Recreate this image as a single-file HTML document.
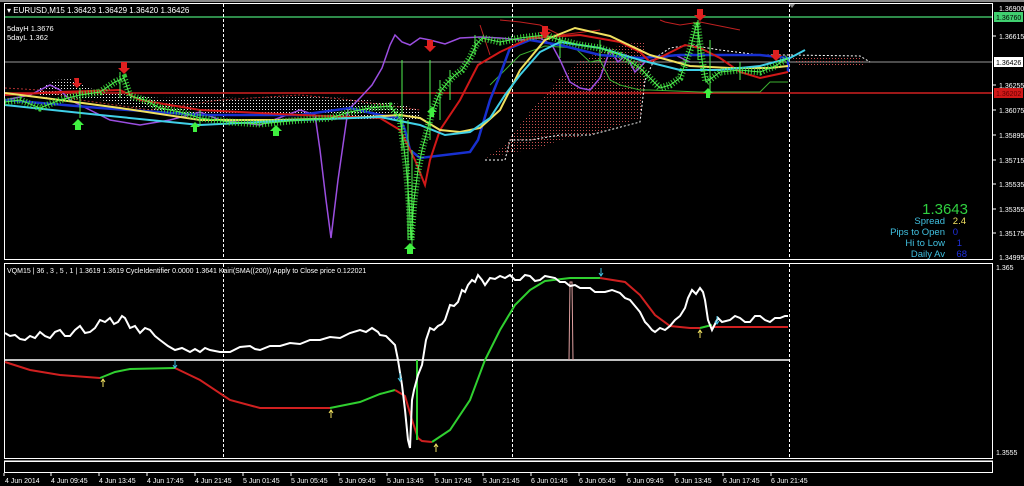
<!DOCTYPE html>
<html><head><meta charset="utf-8"><style>
html,body{margin:0;padding:0;background:#000;width:1024px;height:486px;overflow:hidden}
svg{display:block}
text{font-family:"Liberation Sans",sans-serif}
</style></head><body>
<svg width="1024" height="486" viewBox="0 0 1024 486" xmlns="http://www.w3.org/2000/svg">
<defs>
<pattern id="rd" width="3" height="3" patternUnits="userSpaceOnUse"><rect x="1" y="1" width="1" height="1" fill="#c85050"/></pattern>
<pattern id="wd" width="3" height="3" patternUnits="userSpaceOnUse"><rect x="1" y="1" width="1" height="1" fill="#eee"/></pattern>
</defs>
<rect width="1024" height="486" fill="#000"/>
<rect x="0" y="0" width="1024" height="2" fill="#888"/>
<rect x="4.5" y="3.5" width="988" height="256" fill="none" stroke="#fff"/>
<line x1="5" y1="17" x2="992" y2="17" stroke="#2e8b4a" stroke-width="2"/>
<line x1="5" y1="62" x2="992" y2="62" stroke="#999" stroke-width="1"/>
<line x1="5" y1="93" x2="992" y2="93" stroke="#d02020" stroke-width="1.5"/>
<g stroke="#fff" stroke-dasharray="3,2" stroke-width="1">
<line x1="223.5" y1="4" x2="223.5" y2="259"/><line x1="512.5" y1="4" x2="512.5" y2="259"/><line x1="789.5" y1="4" x2="789.5" y2="259"/>
<line x1="223.5" y1="264" x2="223.5" y2="458"/><line x1="512.5" y1="264" x2="512.5" y2="458"/><line x1="789.5" y1="264" x2="789.5" y2="458"/>
</g>
<polygon points="789,4 795,4 792,8" fill="#888"/>
<polygon points="485,158 505,145 520,125 535,105 548,92 560,78 578,62 600,52 625,44 645,42 645,80 640,118 620,125 590,135 560,140 540,148 515,152" fill="url(#rd)"/>
<polyline points="485,160 505,160 510,140 530,140 560,135 590,135 640,122 645,80" fill="none" stroke="#fff" stroke-dasharray="2,2"/>
<polyline points="645,80 655,58 670,48 690,45 720,50 760,55 790,55 860,56 870,62" fill="none" stroke="#fff" stroke-dasharray="2,2"/>
<polygon points="790,58 860,58 866,66 800,66" fill="url(#rd)"/>
<polyline points="500,20 520,22 540,25 560,35 600,30" fill="none" stroke="#c02020" stroke-width="1"/>
<polyline points="660,20 665,22 680,25 700,22 740,30" fill="none" stroke="#c02020" stroke-width="1"/>
<polyline points="480,25 485,40 490,55" fill="none" stroke="#c02020"/>
<polygon points="40,88 55,80 70,79 85,86 100,92 160,98 200,97 240,98 300,97 350,98 400,104 420,110 420,120 380,120 330,118 300,118 250,118 200,116 150,110 100,100 60,96 40,98" fill="url(#wd)"/>
<polyline points="5,88 40,90 80,100 150,110 220,100 300,95 350,100 420,110" fill="none" stroke="#b03030" stroke-dasharray="2,2"/>
<polyline points="5,100 30,95 50,85 60,90 70,100 90,110 110,120 140,125 170,120 200,112 220,120 260,125 300,110 315,115 320,150 326,200 331,238 338,180 348,110 360,98 372,85 382,68 390,45 395,35 402,42 410,45 420,38 430,40 445,44 460,38 480,37 500,38 520,40 540,38 552,45 560,60 570,82 580,88 590,90 600,78 610,50 618,62 626,55 635,72 645,62 660,58 675,55 690,62" fill="none" stroke="#9b4ee0" stroke-width="1.5"/>
<polyline points="490,85 500,75 520,55 545,46 560,47 575,48 590,62 600,60 610,80 620,85 640,90 650,90 700,92 740,92 760,92 770,82 788,82" fill="none" stroke="#3cb030" stroke-width="1"/>
<polyline points="5,100 100,108 200,115 300,115 350,108 380,115 400,118 405,130 410,150 420,158 470,152 478,140 490,100 500,75 510,48 530,40 560,45 600,55 640,58 680,55 720,55 760,55 788,58 788,72" fill="none" stroke="#1830d0" stroke-width="2.5"/>
<polyline points="5,95 60,92 120,90 140,100 200,110 300,115 380,118 400,130 415,160 425,185 430,160 440,130 460,100 478,65 500,52 530,38 580,35 620,42 640,52 650,62 665,55 685,45 700,48 720,58 740,72 760,78 788,72" fill="none" stroke="#d01818" stroke-width="2"/>
<polyline points="5,93 60,100 120,108 200,120 280,120 350,118 400,115 420,118 440,130 460,132 480,128 500,110 520,70 545,40 575,28 610,36 650,55 690,66 730,68 770,68 788,66" fill="none" stroke="#f0e060" stroke-width="2"/>
<polyline points="5,105 100,115 200,125 300,120 380,117 420,125 445,135 470,132 490,118 505,95 520,75 540,52 560,42 600,48 640,60 680,70 720,70 760,66 790,58 805,50" fill="none" stroke="#40d0e8" stroke-width="2"/>
<polyline points="5,102 20,100 40,108 60,100 80,95 100,92 115,82 124,78 130,96 145,100 160,108 180,112 200,118 230,122 260,124 300,120 330,118 350,112 370,108 390,106 400,118 403,140 406,165 409,200 411,240 414,200 418,170 422,150 426,135 432,112 440,92 448,82 455,75 462,70 470,58 476,45 482,38 500,42 520,38 545,35 560,40 580,45 600,48 620,55 640,68 660,88 670,85 680,78 690,50 697,22 702,60 706,82 712,78 720,72 740,70 760,72 775,66 788,58" fill="none" stroke="#40e040" stroke-width="7" stroke-dasharray="1,2" opacity="0.9"/>
<polyline points="5,102 20,100 40,108 60,100 80,95 100,92 115,82 124,78 130,96 145,100 160,108 180,112 200,118 230,122 260,124 300,120 330,118 350,112 370,108 390,106 400,118 403,140 406,165 409,200 411,240 414,200 418,170 422,150 426,135 432,112 440,92 448,82 455,75 462,70 470,58 476,45 482,38 500,42 520,38 545,35 560,40 580,45 600,48 620,55 640,68 660,88 670,85 680,78 690,50 697,22 702,60 706,82 712,78 720,72 740,70 760,72 775,66 788,58" fill="none" stroke="#50f050" stroke-width="1"/>
<g stroke="#50f050" stroke-width="1">
<line x1="120" y1="72" x2="120" y2="98"/><line x1="80" y1="88" x2="80" y2="118"/><line x1="200" y1="110" x2="200" y2="126"/>
<line x1="402" y1="60" x2="402" y2="150"/><line x1="408" y1="120" x2="408" y2="240"/><line x1="412" y1="150" x2="412" y2="250"/>
<line x1="430" y1="60" x2="430" y2="140"/><line x1="440" y1="80" x2="440" y2="120"/><line x1="450" y1="70" x2="450" y2="100"/>
<line x1="475" y1="35" x2="475" y2="55"/><line x1="698" y1="20" x2="698" y2="60"/><line x1="710" y1="40" x2="710" y2="95"/>
<line x1="560" y1="38" x2="560" y2="58"/><line x1="600" y1="40" x2="600" y2="62"/><line x1="740" y1="62" x2="740" y2="80"/>
</g>
<g fill="#e02020">
<path d="M121,62h6v6h3l-6,6l-6,-6h3z"/><path d="M427,40h6v6h3l-6,6l-6,-6h3z"/><path d="M542,26h6v6h3l-6,6l-6,-6h3z"/>
<path d="M697,9h6v6h3l-6,6l-6,-6h3z"/><path d="M773,50h6v5h3l-6,6l-6,-6h3z"/><path d="M74,78h5v5h3l-5,5l-5,-5h3z"/>
</g>
<g fill="#40f040">
<path d="M78,119l6,6h-3v5h-6v-5h-3z"/><path d="M195,122l5,5h-3v5h-4v-5h-3z"/><path d="M276,125l6,6h-3v5h-6v-5h-3z"/>
<path d="M410,243l6,6h-3v5h-6v-5h-3z"/><path d="M432,107l5,5h-3v5h-4v-5h-3z"/><path d="M708,88l5,5h-3v5h-4v-5h-3z"/>
</g>
<text x="7" y="13" fill="#fff" font-size="8">▾ EURUSD,M15  1.36423 1.36429 1.36420 1.36426</text>
<text x="7" y="31" fill="#fff" font-size="7.5">5dayH 1.3676</text>
<text x="7" y="40" fill="#fff" font-size="7.5">5dayL 1.362</text>
<text x="968" y="214" fill="#30d040" font-size="15" text-anchor="end">1.3643</text>
<g font-size="9.5" text-anchor="end">
<text x="945" y="224" fill="#40c0e0">Spread</text><text x="966" y="224" fill="#f0e060">2.4</text>
<text x="945" y="235" fill="#40c0e0">Pips to Open</text><text x="958" y="235" fill="#2030e0">0</text>
<text x="945" y="246" fill="#40c0e0">Hi to Low</text><text x="962" y="246" fill="#2030e0">1</text>
<text x="945" y="257" fill="#40c0e0">Daily Av</text><text x="967" y="257" fill="#2030e0">68</text>
</g>
<g fill="#fff" font-size="7">
<text x="999" y="11">1.36900</text><text x="999" y="39">1.36615</text><text x="999" y="88">1.36255</text>
<text x="999" y="113">1.36075</text><text x="999" y="138">1.35895</text><text x="999" y="163">1.35715</text>
<text x="999" y="187">1.35535</text><text x="999" y="212">1.35355</text><text x="999" y="236">1.35175</text><text x="999" y="260">1.34995</text>
</g>
<rect x="994" y="12" width="29" height="10" fill="#40d070"/><text x="996" y="20" font-size="7" fill="#000">1.36760</text>
<rect x="994" y="57" width="29" height="10" fill="#fff"/><text x="996" y="65" font-size="7" fill="#000">1.36426</text>
<rect x="994" y="88" width="29" height="10" fill="#d01818"/><text x="996" y="96" font-size="7" fill="#600">1.36202</text>
<g stroke="#fff"><line x1="993" y1="36" x2="996" y2="36"/><line x1="993" y1="85" x2="996" y2="85"/><line x1="993" y1="110" x2="996" y2="110"/><line x1="993" y1="135" x2="996" y2="135"/><line x1="993" y1="160" x2="996" y2="160"/><line x1="993" y1="184" x2="996" y2="184"/><line x1="993" y1="209" x2="996" y2="209"/><line x1="993" y1="233" x2="996" y2="233"/></g>
<rect x="4.5" y="263.5" width="988" height="195" fill="none" stroke="#fff"/>
<text x="7" y="273" fill="#fff" font-size="7">VQM15 | 36 , 3 , 5 , 1  |  1.3619 1.3619  CycleIdentifier 0.0000 1.3641  Kairi(SMA((200)) Apply to Close price 0.122021</text>
<text x="996" y="270" fill="#fff" font-size="7">1.365</text>
<text x="996" y="455" fill="#fff" font-size="7">1.3555</text>
<line x1="5" y1="360" x2="789" y2="360" stroke="#fff" stroke-width="1.5"/>
<polyline points="569,360 570,282 572,282 573,360" fill="none" stroke="#e0a0a0" stroke-width="1"/>
<polyline points="5,362 30,370 60,375 100,378" fill="none" stroke="#d02020" stroke-width="2"/>
<polyline points="100,378 115,372 130,369 175,368" fill="none" stroke="#30d030" stroke-width="2"/>
<polyline points="175,368 200,380 230,400 260,408 330,408" fill="none" stroke="#d02020" stroke-width="2"/>
<polyline points="330,408 360,402 380,394 395,390" fill="none" stroke="#30d030" stroke-width="2"/>
<polyline points="395,390 405,396 412,420 418,438 422,441 432,442" fill="none" stroke="#d02020" stroke-width="2"/>
<polyline points="432,442 450,430 470,400 485,360 500,330 515,305 530,290 545,281 570,278 600,278" fill="none" stroke="#30d030" stroke-width="2"/>
<polyline points="600,278 625,282 640,295 655,315 670,326 690,328 700,328" fill="none" stroke="#d02020" stroke-width="2"/>
<polyline points="700,328 712,325" fill="none" stroke="#30d030" stroke-width="2"/>
<polyline points="712,327 788,327" fill="none" stroke="#d02020" stroke-width="2"/>
<line x1="417" y1="360" x2="417" y2="440" stroke="#30d030" stroke-width="2"/>
<polyline points="5,333 10,336 15,335 20,339 25,340 30,336 35,338 40,332 45,336 50,338 55,332 60,330 65,336 70,336 75,330 80,326 85,333 90,332 95,328 100,320 105,322 110,318 114,324 118,322 122,316 125,318 130,328 135,326 140,333 145,328 150,330 155,336 160,340 168,346 175,350 182,348 190,352 195,349 200,352 205,348 210,350 220,352 230,352 240,347 250,346 255,349 260,350 270,346 280,346 290,343 300,344 310,340 320,340 330,337 340,338 350,333 360,330 366,332 372,328 378,332 380,335 386,336 390,340 395,345 398,360 402,385 405,410 408,440 410,448 412,400 414,390 418,375 422,365 426,340 430,328 434,330 438,326 442,324 445,320 450,305 454,306 458,302 462,290 465,292 468,285 472,280 475,282 478,275 482,280 485,285 490,278 495,279 500,276 505,278 510,275 515,280 520,280 525,275 530,276 535,281 540,280 545,276 555,278 560,282 565,282 570,286 575,285 580,288 590,288 595,292 605,292 612,290 620,293 625,298 630,300 635,306 640,312 645,322 648,325 652,330 655,332 660,328 665,330 670,326 675,320 680,316 685,308 688,298 692,290 696,294 700,288 703,292 705,300 708,320 712,330 715,324 718,318 722,322 730,320 735,316 740,318 745,322 750,322 755,316 760,316 765,320 770,322 775,318 780,318 785,316 788,316" fill="none" stroke="#fff" stroke-width="2"/>
<g stroke="#f0e060" stroke-width="1" fill="none"><path d="M103,387v-8m-2,3l2,-3l2,3"/><path d="M331,418v-8m-2,3l2,-3l2,3"/><path d="M436,452v-8m-2,3l2,-3l2,3"/><path d="M700,338v-8m-2,3l2,-3l2,3"/></g>
<g stroke="#40c0e0" stroke-width="1" fill="none"><path d="M175,360v8m-2,-3l2,3l2,-3"/><path d="M601,268v8m-2,-3l2,3l2,-3"/><path d="M400,373v8m-2,-3l2,3l2,-3"/><path d="M717,316v8m-2,-3l2,3l2,-3"/></g>
<line x1="4" y1="460.5" x2="993" y2="460.5" stroke="#888"/>
<rect x="4.5" y="461.5" width="988" height="11" fill="none" stroke="#fff"/>
<g fill="#fff" font-size="7">
<text x="5" y="483">4 Jun 2014</text><text x="51" y="483">4 Jun 09:45</text><text x="99" y="483">4 Jun 13:45</text><text x="147" y="483">4 Jun 17:45</text>
<text x="195" y="483">4 Jun 21:45</text><text x="243" y="483">5 Jun 01:45</text><text x="291" y="483">5 Jun 05:45</text><text x="339" y="483">5 Jun 09:45</text>
<text x="387" y="483">5 Jun 13:45</text><text x="435" y="483">5 Jun 17:45</text><text x="483" y="483">5 Jun 21:45</text><text x="531" y="483">6 Jun 01:45</text>
<text x="579" y="483">6 Jun 05:45</text><text x="627" y="483">6 Jun 09:45</text><text x="675" y="483">6 Jun 13:45</text><text x="723" y="483">6 Jun 17:45</text><text x="771" y="483">6 Jun 21:45</text>
</g>
<g stroke="#fff"><path d="M4,473v3M51,473v3M99,473v3M147,473v3M195,473v3M243,473v3M291,473v3M339,473v3M387,473v3M435,473v3M483,473v3M531,473v3M579,473v3M627,473v3M675,473v3M723,473v3M771,473v3"/></g>
</svg>
</body></html>
